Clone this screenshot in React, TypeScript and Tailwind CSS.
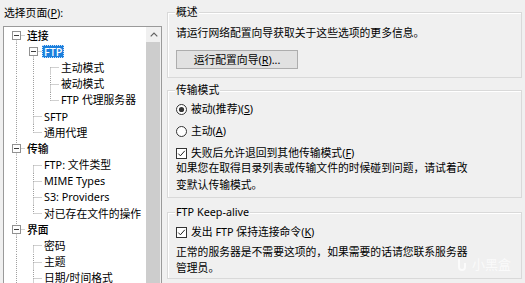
import React from "react";

type TreeRow = { level: number; label: string; exp?: boolean; sel?: boolean; bold?: boolean };

const ROWS: TreeRow[] = [
  { level: 0, label: "连接", exp: true, bold: true },
  { level: 1, label: "FTP", exp: true, sel: true, bold: true },
  { level: 2, label: "主动模式" },
  { level: 2, label: "被动模式" },
  { level: 2, label: "FTP 代理服务器" },
  { level: 1, label: "SFTP" },
  { level: 1, label: "通用代理" },
  { level: 0, label: "传输", exp: true, bold: true },
  { level: 1, label: "FTP: 文件类型" },
  { level: 1, label: "MIME Types" },
  { level: 1, label: "S3: Providers" },
  { level: 1, label: "对已存在文件的操作" },
  { level: 0, label: "界面", exp: true, bold: true },
  { level: 1, label: "密码" },
  { level: 1, label: "主题" },
  { level: 1, label: "日期/时间格式" },
];

const INDENT = 17;
const CELL = 21;
const ROW_H = 16.2;

function hasPrev(i: number) {
  const L = ROWS[i].level;
  for (let j = i - 1; j >= 0; j--) {
    if (ROWS[j].level < L) return false;
    if (ROWS[j].level === L) return true;
  }
  return false;
}

// rows past the bottom of the list keep going, so the lines do too
function hasNext(i: number) {
  const L = ROWS[i].level;
  for (let j = i + 1; j < ROWS.length; j++) {
    if (ROWS[j].level < L) return false;
    if (ROWS[j].level === L) return true;
  }
  return true;
}

function ancestorAt(i: number, lvl: number) {
  for (let j = i - 1; j >= 0; j--) if (ROWS[j].level === lvl) return j;
  return -1;
}

function TreeLines({ i }: { i: number }) {
  const row = ROWS[i];
  const L = row.level;
  const w = INDENT * L + CELL;
  const cx = 12.5 + INDENT * L;
  const dot = { stroke: "#a0a0a0", strokeWidth: 1, strokeDasharray: "1 1" };
  const cont: number[] = [];
  for (let c = 0; c < L; c++) {
    const a = ancestorAt(i, c);
    if (a >= 0 && hasNext(a)) cont.push(c);
  }
  return (
    <svg width={w} height={ROW_H} className="shrink-0">
      {cont.map((c) => (
        <line key={c} x1={12.5 + INDENT * c} x2={12.5 + INDENT * c} y1={0} y2={ROW_H} {...dot} />
      ))}
      {hasPrev(i) && <line x1={cx} x2={cx} y1={0} y2={8.5} {...dot} />}
      {hasNext(i) && <line x1={cx} x2={cx} y1={8.5} y2={ROW_H} {...dot} />}
      <line x1={cx} x2={w} y1={8.5} y2={8.5} {...dot} />
      {row.exp && (
        <g>
          <rect x={cx - 4} y={4.5} width={8} height={8} fill="#fdfdfd" stroke="#919191" />
          <path d={`M${cx - 2.5} 8.5h5`} stroke="#3c3c3c" />
        </g>
      )}
    </svg>
  );
}

function Radio({ on }: { on?: boolean }) {
  return (
    <svg width="11" height="11" viewBox="0 0 11 11" className="shrink-0">
      <circle cx="5.5" cy="5.5" r="5" fill="#fff" stroke="#333" />
      {on && <circle cx="5.5" cy="5.5" r="2.6" fill="#333" />}
    </svg>
  );
}

function Check() {
  return (
    <svg width="11" height="11" viewBox="0 0 11 11" className="shrink-0">
      <rect x="0.5" y="0.5" width="10" height="10" fill="#fff" stroke="#333" />
      <path d="M2.3 5.6 4.4 7.8 8.8 2.8" fill="none" stroke="#222" strokeWidth="1" />
    </svg>
  );
}

function U({ children }: { children: React.ReactNode }) {
  return <span className="underline underline-offset-[1px]">{children}</span>;
}

export default function App() {
  return (
    <div className="relative flex h-[283px] w-[525px] overflow-hidden bg-[#f0f0f0] font-['Noto_Sans','Noto_Sans_CJK_SC',sans-serif] text-[10.8px] text-black">
      {/* page tree */}
      <div className="flex w-[162px] shrink-0 flex-col pl-[3px] pt-[5px]">
        <div className="h-[16px] pl-[1px] leading-[16px]">
          选择页面(<U>P</U>):
        </div>
        <div className="mt-[5px] flex h-[280px] shrink-0 border border-[#9a9a9a] bg-white">
          <div className="flex-1">
            {ROWS.map((r, i) => (
              <div key={i} className="flex h-[16.2px] items-center whitespace-nowrap">
                <TreeLines i={i} />
                <span
                  className={
                    r.sel
                      ? "h-[13px] border border-dotted border-[#c8e0ff] bg-[#1a7fdc] px-[1px] leading-[11px] font-medium text-white"
                      : r.bold
                        ? "px-[2px] leading-[13px] font-medium"
                        : "px-[2px] leading-[13px]"
                  }
                >
                  {r.label}
                </span>
              </div>
            ))}
          </div>
          <div className="flex w-[15px] shrink-0 flex-col bg-[#f0f0f0]">
            <div className="flex h-[15px] items-center justify-center">
              <svg width="8" height="5" viewBox="0 0 8 5">
                <path d="M0.7 4.3 4 1 7.3 4.3" fill="none" stroke="#606060" strokeWidth="1.2" />
              </svg>
            </div>
            <div className="mr-[1px] flex-1 bg-[#cdcdcd]" />
          </div>
        </div>
      </div>

      {/* option groups */}
      <div className="ml-[5px] flex w-[355px] shrink-0 flex-col pt-[4px]">
        <fieldset className="border border-[#d9d9d9] shadow-[inset_1px_1px_0_#ffffff]">
          <legend className="ml-[7px] bg-[#f0f0f0] px-[1px] leading-[16px]">概述</legend>
          <div className="flex flex-col items-start px-[8px] pb-[8px]">
            <div className="mt-[3.5px] leading-[17px]">请运行网络配置向导获取关于这些选项的更多信息。</div>
            <button className="mt-[9.5px] flex h-[19px] w-[122px] items-center justify-center border border-[#adadad] bg-[#e1e1e1] leading-[17px]">
              运行配置向导(<U>R</U>)...
            </button>
          </div>
        </fieldset>

        <fieldset className="mt-[4px] border border-[#d9d9d9] shadow-[inset_1px_1px_0_#ffffff]">
          <legend className="ml-[7px] bg-[#f0f0f0] px-[1px] leading-[16px]">传输模式</legend>
          <div className="flex flex-col px-[8px] pb-[4px]">
            <label className="mt-[3px] flex h-[16px] items-center gap-[4px]">
              <Radio on />
              <span>
                被动(推荐)(<U>S</U>)
              </span>
            </label>
            <label className="mt-[6px] flex h-[16px] items-center gap-[4px]">
              <Radio />
              <span>
                主动(<U>A</U>)
              </span>
            </label>
            <label className="mt-[6px] flex h-[16px] items-center gap-[4px]">
              <Check />
              <span>
                失败后允许退回到其他传输模式(<U>F</U>)
              </span>
            </label>
            <p className="mt-[-1px] leading-[16.5px]">
              如果您在取得目录列表或传输文件的时候碰到问题，请试着改
              <br />
              变默认传输模式。
            </p>
          </div>
        </fieldset>

        <fieldset className="mt-[6px] border border-[#d9d9d9] shadow-[inset_1px_1px_0_#ffffff]">
          <legend className="ml-[7px] bg-[#f0f0f0] px-[1px] leading-[16px]">FTP Keep-alive</legend>
          <div className="flex flex-col px-[8px] pb-[2px]">
            <label className="mt-[4px] flex h-[16px] items-center gap-[4px]">
              <Check />
              <span>
                发出 FTP 保持连接命令(<U>K</U>)
              </span>
            </label>
            <p className="mt-[3.7px] leading-[16px]">
              正常的服务器是不需要这项的，如果需要的话请您联系服务器
              <br />
              管理员。
            </p>
          </div>
        </fieldset>
      </div>

      {/* watermark */}
      <div className="pointer-events-none absolute bottom-[9px] right-[14px] flex items-center gap-[3px] text-[13px] text-white/70">
        <svg width="14" height="14" viewBox="0 0 14 14">
          <path d="M4 2v8a3 3 0 0 0 6 0V6" fill="none" stroke="#ffffff" strokeOpacity="0.7" strokeWidth="2" />
        </svg>
        <span>小黑盒</span>
      </div>
    </div>
  );
}
